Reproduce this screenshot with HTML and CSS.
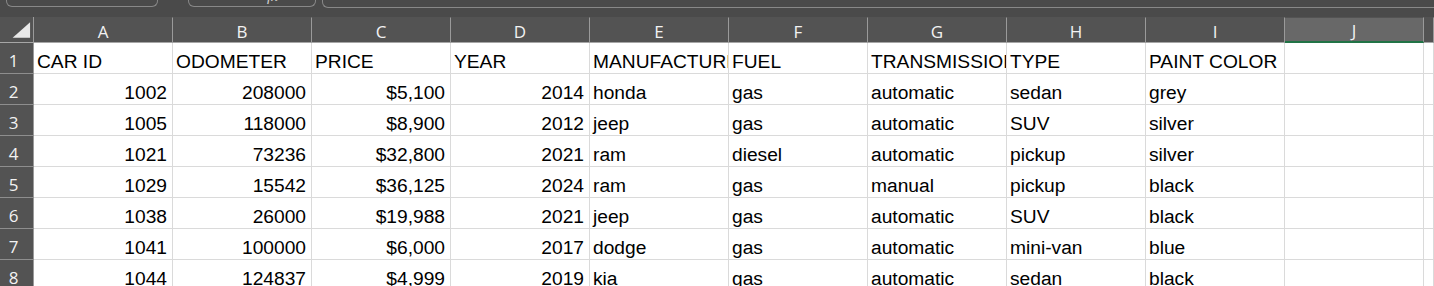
FILE: index.html
```html
<!DOCTYPE html>
<html lang="en">
<head>
    <meta charset="UTF-8">
    <meta name="viewport" content="width=device-width, initial-scale=1.0">
    <title>Cars</title>
    <link rel="stylesheet" href="styles.css">
</head>
<body>
    <div class="topbar">
        <div class="box namebox"></div>
        <div class="box fxbox"><span class="fx">fx</span></div>
        <div class="box formula"></div>
    </div>

    <div class="sheet">
        <div class="row head">
            <div class="corner">
                <svg width="34" height="25" viewBox="0 0 34 25"><polygon points="31,5 31,21 13,21" fill="#e9e9e9"/></svg>
            </div>
            <div class="col">A</div>
            <div class="col">B</div>
            <div class="col">C</div>
            <div class="col">D</div>
            <div class="col">E</div>
            <div class="col">F</div>
            <div class="col">G</div>
            <div class="col">H</div>
            <div class="col">I</div>
            <div class="col selected">J</div>
            <div class="col"></div>
        </div>

        <div class="row">
            <div class="rownum">1</div>
            <div class="cell">CAR ID</div>
            <div class="cell">ODOMETER</div>
            <div class="cell">PRICE</div>
            <div class="cell">YEAR</div>
            <div class="cell">MANUFACTURER</div>
            <div class="cell">FUEL</div>
            <div class="cell">TRANSMISSION</div>
            <div class="cell">TYPE</div>
            <div class="cell">PAINT COLOR</div>
            <div class="cell"></div>
            <div class="cell"></div>
        </div>
        <div class="row">
            <div class="rownum">2</div>
            <div class="cell num">1002</div>
            <div class="cell num">208000</div>
            <div class="cell num">$5,100</div>
            <div class="cell num">2014</div>
            <div class="cell">honda</div>
            <div class="cell">gas</div>
            <div class="cell">automatic</div>
            <div class="cell">sedan</div>
            <div class="cell">grey</div>
            <div class="cell"></div>
            <div class="cell"></div>
        </div>
        <div class="row">
            <div class="rownum">3</div>
            <div class="cell num">1005</div>
            <div class="cell num">118000</div>
            <div class="cell num">$8,900</div>
            <div class="cell num">2012</div>
            <div class="cell">jeep</div>
            <div class="cell">gas</div>
            <div class="cell">automatic</div>
            <div class="cell">SUV</div>
            <div class="cell">silver</div>
            <div class="cell"></div>
            <div class="cell"></div>
        </div>
        <div class="row">
            <div class="rownum">4</div>
            <div class="cell num">1021</div>
            <div class="cell num">73236</div>
            <div class="cell num">$32,800</div>
            <div class="cell num">2021</div>
            <div class="cell">ram</div>
            <div class="cell">diesel</div>
            <div class="cell">automatic</div>
            <div class="cell">pickup</div>
            <div class="cell">silver</div>
            <div class="cell"></div>
            <div class="cell"></div>
        </div>
        <div class="row">
            <div class="rownum">5</div>
            <div class="cell num">1029</div>
            <div class="cell num">15542</div>
            <div class="cell num">$36,125</div>
            <div class="cell num">2024</div>
            <div class="cell">ram</div>
            <div class="cell">gas</div>
            <div class="cell">manual</div>
            <div class="cell">pickup</div>
            <div class="cell">black</div>
            <div class="cell"></div>
            <div class="cell"></div>
        </div>
        <div class="row">
            <div class="rownum">6</div>
            <div class="cell num">1038</div>
            <div class="cell num">26000</div>
            <div class="cell num">$19,988</div>
            <div class="cell num">2021</div>
            <div class="cell">jeep</div>
            <div class="cell">gas</div>
            <div class="cell">automatic</div>
            <div class="cell">SUV</div>
            <div class="cell">black</div>
            <div class="cell"></div>
            <div class="cell"></div>
        </div>
        <div class="row">
            <div class="rownum">7</div>
            <div class="cell num">1041</div>
            <div class="cell num">100000</div>
            <div class="cell num">$6,000</div>
            <div class="cell num">2017</div>
            <div class="cell">dodge</div>
            <div class="cell">gas</div>
            <div class="cell">automatic</div>
            <div class="cell">mini-van</div>
            <div class="cell">blue</div>
            <div class="cell"></div>
            <div class="cell"></div>
        </div>
        <div class="row">
            <div class="rownum">8</div>
            <div class="cell num">1044</div>
            <div class="cell num">124837</div>
            <div class="cell num">$4,999</div>
            <div class="cell num">2019</div>
            <div class="cell">kia</div>
            <div class="cell">gas</div>
            <div class="cell">automatic</div>
            <div class="cell">sedan</div>
            <div class="cell">black</div>
            <div class="cell"></div>
            <div class="cell"></div>
        </div>
    </div>
</body>
</html>
```

FILE: styles.css
```css
body {
    margin: 0;
    background-color: #ffffff;
    font-family: "Liberation Sans", Arial, sans-serif;
    overflow: hidden;
}
.topbar {
    height: 17px;
    background-color: #4a4a4a;
    display: flex;
    align-items: flex-start;
}
.box {
    box-sizing: border-box;
    height: 7px;
    border: 1px solid #888888;
    border-top: none;
    border-radius: 0 0 6px 6px;
}
.namebox {
    margin-left: 6px;
    width: 152px;
}
.fxbox {
    margin-left: 30px;
    width: 128px;
    position: relative;
    overflow: hidden;
}
.fx {
    position: absolute;
    left: 78px;
    bottom: 2px;
    color: #d0d0d0;
    font-family: "Liberation Serif", serif;
    font-style: italic;
    font-size: 15px;
    line-height: 15px;
}
.formula {
    margin-left: 6px;
    flex: 1;
    height: 8px;
    border-right: none;
    border-radius: 0 0 0 6px;
}
.row {
    display: grid;
    grid-template-columns: 34px repeat(10, 139px) 1fr;
    height: 31px;
}
.row > div {
    box-sizing: border-box;
    overflow: hidden;
    white-space: nowrap;
    display: flex;
}
.head {
    height: 26px;
    background-color: #535353;
}
.corner {
    border-right: 1px solid #9a9a9a;
    border-bottom: 1px solid #a6a6a6;
    align-items: flex-end;
}
.corner svg {
    display: block;
}
.col {
    justify-content: center;
    align-items: center;
    padding-top: 2px;
    color: #f2f2f2;
    font-family: "Open Sans", sans-serif;
    font-size: 17px;
    border-right: 1px solid #9a9a9a;
    border-bottom: 1px solid #a6a6a6;
    border-top: 1px solid #535353;
}
.col.selected {
    background-color: #686868;
    border-bottom: 2px solid #217346;
}
.rownum {
    justify-content: center;
    align-items: flex-end;
    padding-right: 6px;
    padding-bottom: 1px;
    background-color: #535353;
    color: #f2f2f2;
    font-family: "Open Sans", sans-serif;
    font-size: 17px;
    line-height: 22px;
    border-right: 1px solid #9a9a9a;
    border-bottom: 1px solid #8e8e8e;
}
.cell {
    align-items: flex-end;
    padding: 0 5px 1px 3px;
    font-size: 19.2px;
    line-height: 20px;
    color: #000000;
    border-right: 1px solid #dadada;
    border-bottom: 1px solid #dadada;
}
.cell.num {
    justify-content: flex-end;
}
```
